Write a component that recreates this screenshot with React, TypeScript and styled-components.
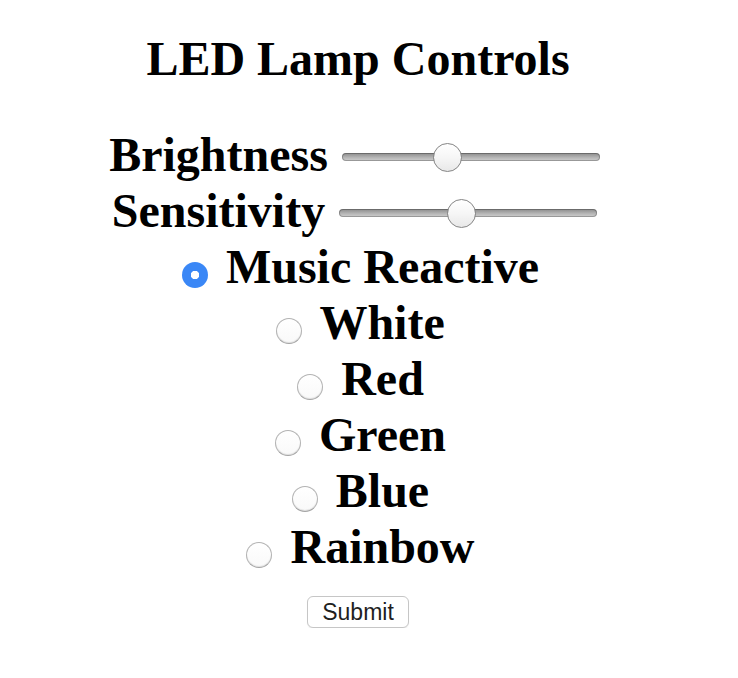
import React, { useState } from 'react';
import styled, { createGlobalStyle } from 'styled-components';

const GlobalStyle = createGlobalStyle`
  body {
    margin: 8px;
    background: #ffffff;
    font-family: 'Liberation Serif', 'Times New Roman', serif;
    color: #000000;
  }
`;

const Page = styled.div`
  width: 700px;
  text-align: center;
`;

const Title = styled.h1`
  margin: 23px 0 40px;
  font-size: 48px;
  line-height: 56px;
  font-weight: bold;
`;

const Form = styled.form`
  margin: 0;
`;

const Row = styled.div`
  padding-right: 5px;
  font-size: 48px;
  line-height: 56px;
  font-weight: bold;
  white-space: nowrap;
`;

const Slider = styled.input`
  -webkit-appearance: none;
  appearance: none;
  width: 258px;
  height: 28px;
  margin: 0 2px;
  padding: 0;
  background: transparent;
  vertical-align: baseline;

  &::-webkit-slider-runnable-track {
    height: 8px;
    border-radius: 4px;
    background: linear-gradient(#8a8a8a, #b8b8b8 60%, #cfcfcf);
    box-shadow: inset 0 0 0 1px rgba(0, 0, 0, 0.25);
  }

  &::-webkit-slider-thumb {
    -webkit-appearance: none;
    width: 29px;
    height: 29px;
    margin-top: -10.5px;
    border-radius: 50%;
    box-sizing: border-box;
    border: 1.5px solid #858585;
    background: linear-gradient(#ffffff, #f6f6f6 50%, #e8e8e8);
  }
`;

const Radio = styled.input`
  -webkit-appearance: none;
  appearance: none;
  width: 26px;
  height: 26px;
  margin: 0 6px 0 10px;
  box-sizing: border-box;
  border-radius: 50%;
  border: 1px solid #b3b3b3;
  border-bottom-color: #a4a4a4;
  background: linear-gradient(#ffffff, #f9f9f9);
  box-shadow: inset 0 -1px 1px rgba(0, 0, 0, 0.1);
  vertical-align: -5px;

  &:checked {
    border: none;
    box-shadow: none;
    background: radial-gradient(circle, #ffffff 0 4px, #3a87f6 4.5px);
  }
`;

const SubmitButton = styled.button`
  margin-top: 21px;
  height: 32px;
  padding: 0 14px;
  font-family: 'Liberation Sans', Arial, sans-serif;
  font-size: 23px;
  line-height: 30px;
  color: #1f1f1f;
  background: #ffffff;
  border: 1px solid #c6c6c6;
  border-radius: 6px;
  box-shadow: 0 1px 1px rgba(0, 0, 0, 0.06);
`;

const modes = ['Music Reactive', 'White', 'Red', 'Green', 'Blue', 'Rainbow'];

const App: React.FC = () => {
  const [brightness, setBrightness] = useState(40);
  const [sensitivity, setSensitivity] = useState(47);
  const [mode, setMode] = useState('Music Reactive');

  return (
    <Page>
      <GlobalStyle />
      <Title>LED Lamp Controls</Title>
      <Form onSubmit={(e) => e.preventDefault()}>
        <Row>
          <label htmlFor="brightness">Brightness</label>{' '}
          <Slider
            id="brightness"
            type="range"
            min={0}
            max={100}
            value={brightness}
            onChange={(e) => setBrightness(Number(e.target.value))}
          />
        </Row>
        <Row>
          <label htmlFor="sensitivity">Sensitivity</label>{' '}
          <Slider
            id="sensitivity"
            type="range"
            min={0}
            max={100}
            value={sensitivity}
            onChange={(e) => setSensitivity(Number(e.target.value))}
          />
        </Row>
        {modes.map((m) => (
          <Row key={m}>
            <Radio
              type="radio"
              name="mode"
              id={m}
              checked={mode === m}
              onChange={() => setMode(m)}
            />{' '}
            <label htmlFor={m}>{m}</label>
          </Row>
        ))}
        <SubmitButton type="submit">Submit</SubmitButton>
      </Form>
    </Page>
  );
};

export default App;
